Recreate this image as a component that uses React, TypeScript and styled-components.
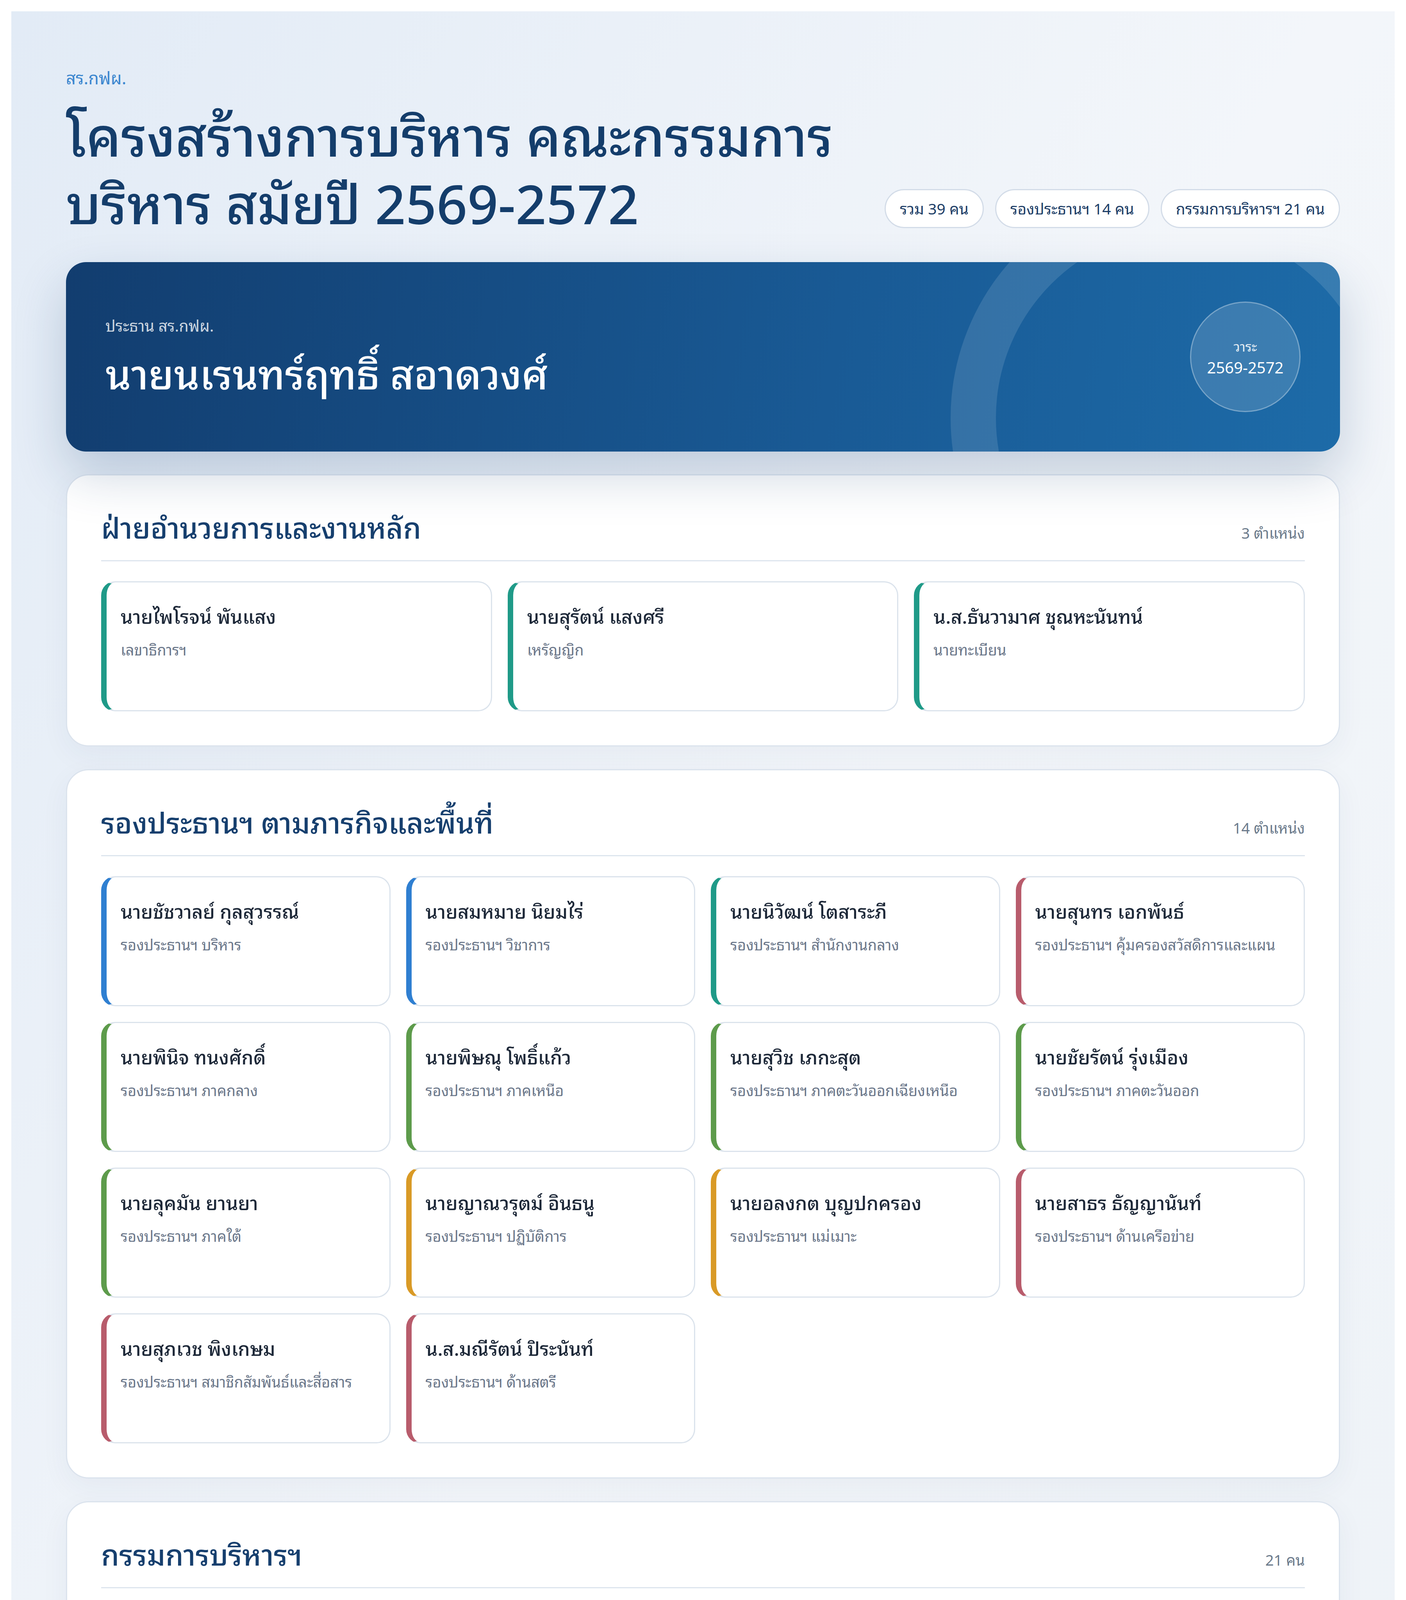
import React from 'react';
import styled, { createGlobalStyle } from 'styled-components';

const GlobalStyle = createGlobalStyle`
  body {
    margin: 29px;
    font-family: "Noto Sans", "Noto Sans Thai Looped", "Noto Serif Thai", "Loma", "Garuda", sans-serif;
    color: #1f2a3a;
  }
  * {
    box-sizing: border-box;
  }
`;

const ACCENT = {
  blue: '#2f7fd1',
  teal: '#1f9a88',
  rose: '#b85c6c',
  green: '#5d9b4b',
  amber: '#d99a26',
};

type Member = { name: string; role: string; accent: string };

const core: Member[] = [
  { name: 'นายไพโรจน์ พันแสง', role: 'เลขาธิการฯ', accent: ACCENT.teal },
  { name: 'นายสุรัตน์ แสงศรี', role: 'เหรัญญิก', accent: ACCENT.teal },
  { name: 'น.ส.ธันวามาศ ชุณหะนันทน์', role: 'นายทะเบียน', accent: ACCENT.teal },
];

const vice: Member[] = [
  { name: 'นายชัชวาลย์ กุลสุวรรณ์', role: 'รองประธานฯ บริหาร', accent: ACCENT.blue },
  { name: 'นายสมหมาย นิยมไร่', role: 'รองประธานฯ วิชาการ', accent: ACCENT.blue },
  { name: 'นายนิวัฒน์ โตสาระภี', role: 'รองประธานฯ สำนักงานกลาง', accent: ACCENT.teal },
  { name: 'นายสุนทร เอกพันธ์', role: 'รองประธานฯ คุ้มครองสวัสดิการและแผน', accent: ACCENT.rose },
  { name: 'นายพินิจ ทนงศักดิ์', role: 'รองประธานฯ ภาคกลาง', accent: ACCENT.green },
  { name: 'นายพิษณุ โพธิ์แก้ว', role: 'รองประธานฯ ภาคเหนือ', accent: ACCENT.green },
  { name: 'นายสุวิช เภกะสุต', role: 'รองประธานฯ ภาคตะวันออกเฉียงเหนือ', accent: ACCENT.green },
  { name: 'นายชัยรัตน์ รุ่งเมือง', role: 'รองประธานฯ ภาคตะวันออก', accent: ACCENT.green },
  { name: 'นายลุคมัน ยานยา', role: 'รองประธานฯ ภาคใต้', accent: ACCENT.green },
  { name: 'นายญาณวรุตม์ อินธนู', role: 'รองประธานฯ ปฏิบัติการ', accent: ACCENT.amber },
  { name: 'นายอลงกต บุญปกครอง', role: 'รองประธานฯ แม่เมาะ', accent: ACCENT.amber },
  { name: 'นายสาธร ธัญญานันท์', role: 'รองประธานฯ ด้านเครือข่าย', accent: ACCENT.rose },
  { name: 'นายสุภเวช พิงเกษม', role: 'รองประธานฯ สมาชิกสัมพันธ์และสื่อสาร', accent: ACCENT.rose },
  { name: 'น.ส.มณีรัตน์ ปิระนันท์', role: 'รองประธานฯ ด้านสตรี', accent: ACCENT.rose },
];

const board = [
  'นายสมบัติ เสียงดี',
  'นายไพฑูรย์ กฤตสัมพันธ์',
  'นางพรวิมล ปรปักษ์ขาม',
  'นายสิทธิโชค พงษ์มาลา',
  'นายประเสริฐ จักรนารายณ์',
  'นายอารีย์ มะยาระ',
  'น.ส.พิรชา ตุ้นสกุล',
  'นายนำโชค วงศ์แสนสุข',
  'นายสินสมุทร เวียงจันทร์',
  'นายปรีวัติ ประภาเวลัง',
  'นายทวีศักดิ์ สุขศิริ',
  'นายชลธรณ์ นิกรพล',
  'นายภาณุพงศ์ เพ็งเพ็ชร',
  'นายพงษ์ศักดิ์ ศึกหาญ',
  'จ.ส.อ.อัศวิน สุจิโรจน์',
  'นายขุนทอง วัจนะ',
  'ส.อ.บัณฑิตย์ พนาพิทักษ์กุล',
  'นายไพบูลย์ ภูษิต',
  'นายกิติศักดิ์ ชิดญาติ',
  'นายอัครา เตชะมานิต',
  'นายจิรันธนิน จะไว',
];

const MemberCard = ({ member }: { member: Member }) => (
  <Card $accent={member.accent}>
    <CardName>{member.name}</CardName>
    <CardRole>{member.role}</CardRole>
  </Card>
);

export default function App() {
  return (
    <>
      <GlobalStyle />
      <Page>
        <Container>
          <Header>
            <div>
              <Eyebrow>สร.กฟผ.</Eyebrow>
              <Title>
                โครงสร้างการบริหาร คณะกรรมการ
                <br />
                บริหาร สมัยปี 2569-2572
              </Title>
            </div>
            <Pills>
              <Pill>รวม 39 คน</Pill>
              <Pill>รองประธานฯ 14 คน</Pill>
              <Pill>กรรมการบริหารฯ 21 คน</Pill>
            </Pills>
          </Header>

          <Banner>
            <div>
              <BannerLabel>ประธาน สร.กฟผ.</BannerLabel>
              <BannerName>นายนเรนทร์ฤทธิ์ สอาดวงศ์</BannerName>
            </div>
            <TermBadge>
              <small>วาระ</small>
              <span>2569-2572</span>
            </TermBadge>
          </Banner>

          <Panel>
            <PanelHead $space={51}>
              <PanelTitle>ฝ่ายอำนวยการและงานหลัก</PanelTitle>
              <Count>3 ตำแหน่ง</Count>
            </PanelHead>
            <CardGrid $cols={3}>
              {core.map((m) => (
                <MemberCard key={m.name} member={m} />
              ))}
            </CardGrid>
          </Panel>

          <Panel>
            <PanelHead $space={51}>
              <PanelTitle>รองประธานฯ ตามภารกิจและพื้นที่</PanelTitle>
              <Count>14 ตำแหน่ง</Count>
            </PanelHead>
            <CardGrid $cols={4}>
              {vice.map((m) => (
                <MemberCard key={m.name} member={m} />
              ))}
            </CardGrid>
          </Panel>

          <Panel>
            <PanelHead $space={25}>
              <PanelTitle>กรรมการบริหารฯ</PanelTitle>
              <Count>21 คน</Count>
            </PanelHead>
            <BoardList>
              {board.map((name, i) => (
                <BoardRow key={name}>
                  <BoardNum>{String(i + 1).padStart(2, '0')}</BoardNum>
                  <BoardName>{name}</BoardName>
                </BoardRow>
              ))}
            </BoardList>
          </Panel>

          <Footer>จัดทำจากข้อมูลรายชื่อคณะกรรมการบริหาร สร.กฟผ. สมัยปี 2569-2572</Footer>
        </Container>
      </Page>
    </>
  );
}

const Page = styled.div`
  background: linear-gradient(120deg, #e2ebf6 0%, #f3f6fa 50%, #edf2f7 100%);
  padding: 138px 138px 145px;
`;

const Container = styled.div`
  max-width: 3262px;
  margin: 0 auto;
`;

const Header = styled.header`
  display: flex;
  justify-content: space-between;
  align-items: flex-end;
  gap: 87px;
`;

const Eyebrow = styled.div`
  font-size: 43.5px;
  line-height: 65px;
  color: #3a86cf;
`;

const Title = styled.h1`
  margin: 29px 0 0;
  font-size: 138px;
  line-height: 1.25;
  font-weight: 500;
  color: #143d6b;
`;

const Pills = styled.div`
  display: flex;
  gap: 29px;
  flex-shrink: 0;
  margin-bottom: 22px;
`;

const Pill = styled.span`
  padding: 18px 36px;
  border: 3px solid #d3dce8;
  border-radius: 999px;
  background: #fff;
  font-size: 39px;
  line-height: 58px;
  white-space: nowrap;
  color: #1c3d66;
`;

const Banner = styled.section`
  position: relative;
  overflow: hidden;
  margin-top: 65px;
  display: flex;
  align-items: center;
  justify-content: space-between;
  padding: 101px;
  border-radius: 51px;
  background: linear-gradient(100deg, #123d6f 0%, #195a95 60%, #1d6ba8 100%);
  color: #fff;
  box-shadow: 0 58px 130px rgba(21, 64, 112, 0.22);

  &::after {
    content: '';
    position: absolute;
    top: -203px;
    right: -207px;
    width: 972px;
    height: 972px;
    border-radius: 50%;
    border: 116px solid rgba(255, 255, 255, 0.12);
  }
`;

const BannerLabel = styled.div`
  font-size: 40px;
  line-height: 58px;
  color: rgba(255, 255, 255, 0.8);
`;

const BannerName = styled.div`
  margin-top: 29px;
  font-size: 104px;
  line-height: 130px;
  font-weight: 500;
`;

const TermBadge = styled.div`
  position: relative;
  z-index: 1;
  width: 283px;
  height: 283px;
  border-radius: 50%;
  border: 3px solid rgba(255, 255, 255, 0.3);
  background: rgba(255, 255, 255, 0.14);
  display: flex;
  flex-direction: column;
  align-items: center;
  justify-content: center;
  line-height: 54px;

  small {
    font-size: 34px;
    color: rgba(255, 255, 255, 0.9);
  }
  span {
    font-size: 40px;
  }
`;

const Panel = styled.section`
  margin-top: 58px;
  padding: 87px;
  background: #fff;
  border: 3px solid #dbe3ed;
  border-radius: 58px;
  box-shadow: 0 22px 72px rgba(30, 60, 100, 0.05);
`;

const PanelHead = styled.div<{ $space: number }>`
  display: flex;
  justify-content: space-between;
  align-items: baseline;
  padding-bottom: 36px;
  border-bottom: 3px solid #dde5ee;
  margin-bottom: ${(p) => p.$space}px;
`;

const PanelTitle = styled.h2`
  margin: 0;
  font-size: 74px;
  line-height: 94px;
  font-weight: 500;
  color: #163f6e;
`;

const Count = styled.span`
  font-size: 38px;
  color: #6b7a8b;
`;

const CardGrid = styled.div<{ $cols: number }>`
  display: grid;
  grid-template-columns: repeat(${(p) => p.$cols}, 1fr);
  gap: 40px;
`;

const Card = styled.div<{ $accent: string }>`
  min-height: 333px;
  padding: 51px 36px;
  background: #fff;
  border: 3px solid #dbe3ec;
  border-left: 14px solid ${(p) => p.$accent};
  border-radius: 36px;
`;

const CardName = styled.div`
  font-size: 49px;
  line-height: 72px;
  font-weight: 500;
  color: #1d2838;
`;

const CardRole = styled.div`
  margin-top: 20px;
  font-size: 38px;
  line-height: 58px;
  color: #6b778a;
`;

const BoardList = styled.div`
  display: grid;
  grid-template-columns: repeat(3, 1fr);
  column-gap: 40px;
`;

const BoardRow = styled.div`
  display: flex;
  align-items: center;
  gap: 43px;
  padding: 51px 0 29px;
  border-bottom: 3px solid #e2e8f0;
`;

const BoardNum = styled.span`
  flex-shrink: 0;
  width: 87px;
  height: 87px;
  border-radius: 50%;
  background: #edf3fa;
  color: #2b5b8f;
  font-size: 33px;
  display: flex;
  align-items: center;
  justify-content: center;
`;

const BoardName = styled.span`
  font-size: 42px;
  line-height: 60px;
  color: #1f2a3a;
`;

const Footer = styled.div`
  margin-top: 58px;
  text-align: right;
  font-size: 36px;
  line-height: 54px;
  color: #6b7789;
`;
